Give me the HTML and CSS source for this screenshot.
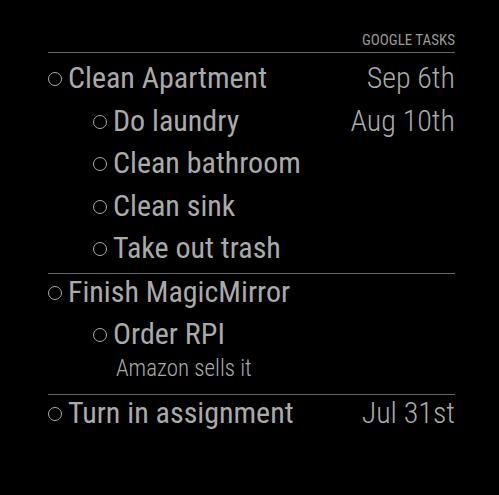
FILE: index.html
```html
<!DOCTYPE html>
<html>
<head>
<meta charset="utf-8">
<link rel="stylesheet" href="styles.css">
</head>
<body>
<div class="module">
  <header class="module-header">Google Tasks</header>
  <div class="group">
    <div class="task">
      <span class="check"></span><span class="title">Clean Apartment</span><span class="due">Sep 6th</span>
    </div>
    <div class="task sub">
      <span class="check"></span><span class="title">Do laundry</span><span class="due">Aug 10th</span>
    </div>
    <div class="task sub">
      <span class="check"></span><span class="title">Clean bathroom</span>
    </div>
    <div class="task sub">
      <span class="check"></span><span class="title">Clean sink</span>
    </div>
    <div class="task sub">
      <span class="check"></span><span class="title">Take out trash</span>
    </div>
  </div>
  <div class="group">
    <div class="task">
      <span class="check"></span><span class="title">Finish MagicMirror</span>
    </div>
    <div class="task sub">
      <span class="check"></span><span class="title">Order RPI</span>
    </div>
    <div class="note">Amazon sells it</div>
  </div>
  <div class="group">
    <div class="task">
      <span class="check"></span><span class="title">Turn in assignment</span><span class="due">Jul 31st</span>
    </div>
  </div>
</div>
</body>
</html>
```
FILE: styles.css
```css
html, body {
  margin: 0;
  padding: 0;
  background: #000;
}
body {
  font-family: "Roboto Condensed", Roboto, "Liberation Sans", sans-serif;
  font-stretch: condensed;
  color: #aaa;
}
.module {
  margin: 0 44px 0 48px;
  padding-top: 33px;
}
.module-header {
  font-size: 15px;
  line-height: 15px;
  text-transform: uppercase;
  color: #999;
  text-align: right;
  padding-bottom: 4px;
  border-bottom: 1px solid #666;
  margin-bottom: 7px;
}
.group + .group {
  border-top: 1px solid #666;
}
.task {
  display: flex;
  align-items: center;
  font-size: 30px;
  line-height: 36px;
  height: 36px;
  margin-bottom: 6.5px;
}
.task.sub {
  padding-left: 45px;
}
.check {
  flex: none;
  width: 12px;
  height: 12px;
  border: 1.4px solid #aaa;
  border-radius: 50%;
  margin-right: 6px;
  margin-top: 2px;
}
.title {
  flex: 1;
  color: #aaa;
}
.due {
  font-weight: 300;
  color: #aaa;
}
.note {
  padding-left: 68px;
  font-size: 23px;
  line-height: 29px;
  font-weight: 300;
  color: #aaa;
  margin-top: -5px;
  padding-bottom: 11px;
}
```
